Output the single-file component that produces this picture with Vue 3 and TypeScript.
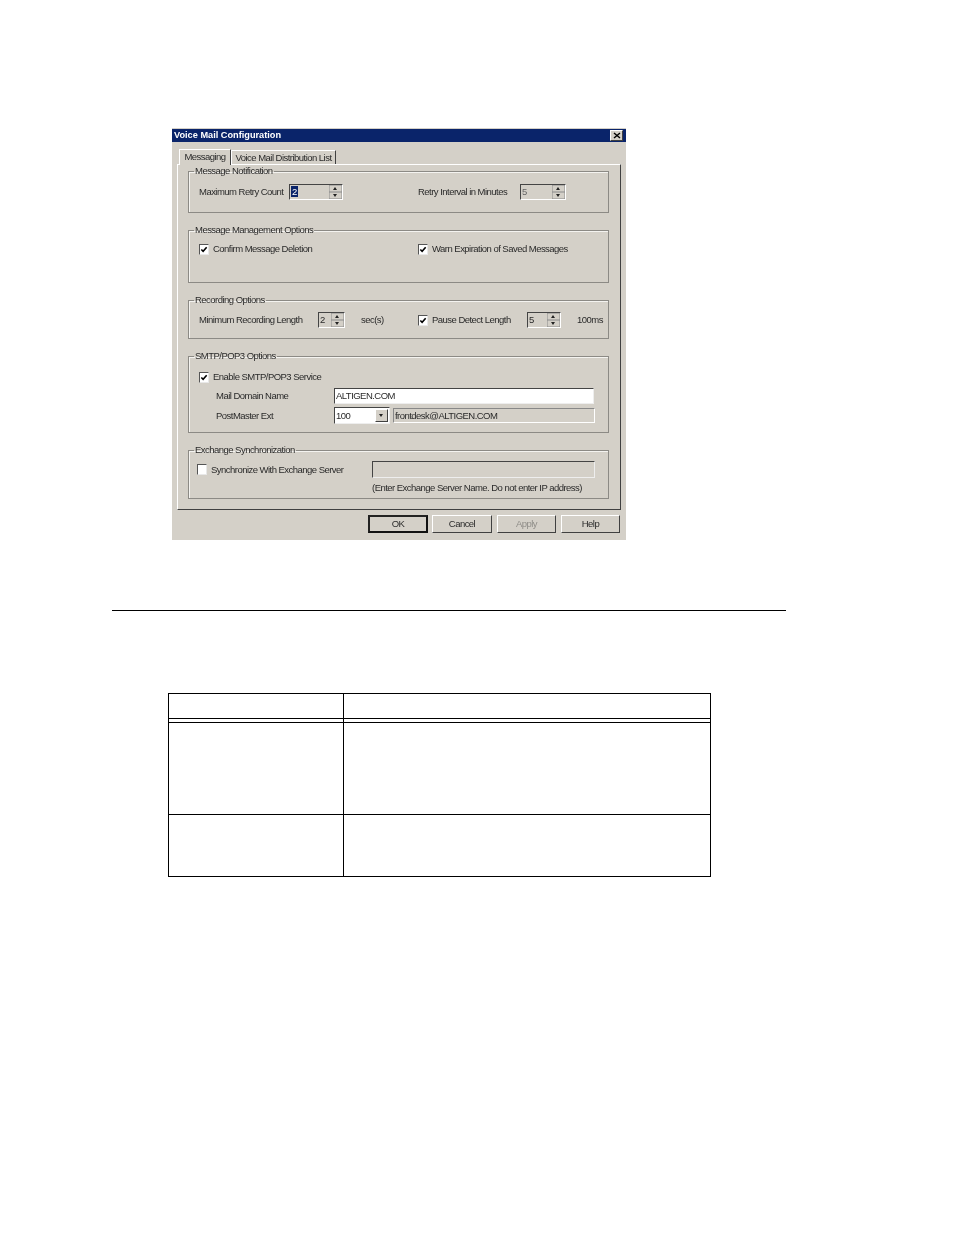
<script setup lang="ts">
const tabs: string[] = ['Messaging', 'Voice Mail Distribution List']
const buttons = [
  { label: 'OK', cls: 'default' },
  { label: 'Cancel', cls: '' },
  { label: 'Apply', cls: 'disabled' },
  { label: 'Help', cls: '' },
]
</script>

<template>
  <main class="page">
    <section class="dialog">
      <header class="titlebar">
        <span class="title">Voice Mail Configuration</span>
        <span class="close" aria-label="Close">
          <svg width="8" height="7" viewBox="0 0 8 7"><path d="M1 1l6 5M7 1L1 6" fill="none" stroke="#000" stroke-width="1.400" /></svg>
        </span>
      </header>

      <nav class="tabs">
        <span v-for="(t, i) in tabs" :key="t" class="tab" :class="{ active: i === 0 }">{{ t }}</span>
      </nav>

      <div class="panel">
        <fieldset class="group g1">
          <legend>Message Notification</legend>
          <div class="row r1">
            <span class="w-max">Maximum Retry Count</span>
            <span class="spin s54"><span class="val"><b class="sel">2</b></span><span class="arrows"><i class="up"></i><i class="down"></i></span></span>
            <span class="w-retry">Retry Interval in Minutes</span>
            <span class="spin s46"><span class="val off">5</span><span class="arrows"><i class="up"></i><i class="down"></i></span></span>
          </div>
        </fieldset>

        <fieldset class="group g2">
          <legend>Message Management Options</legend>
          <div class="row r2">
            <label class="check c219"><span class="box"><svg viewBox="0 0 9 9" width="9" height="9"><path d="M1.500 4.500l2 2L7.500 2" fill="none" stroke="#000" stroke-width="1.800" /></svg></span>Confirm Message Deletion</label>
            <label class="check"><span class="box"><svg viewBox="0 0 9 9" width="9" height="9"><path d="M1.500 4.500l2 2L7.500 2" fill="none" stroke="#000" stroke-width="1.800" /></svg></span>Warn Expiration of Saved Messages</label>
          </div>
        </fieldset>

        <fieldset class="group g3">
          <legend>Recording Options</legend>
          <div class="row r3">
            <span class="w-min">Minimum Recording Length</span>
            <span class="spin s27"><span class="val">2</span><span class="arrows"><i class="up"></i><i class="down"></i></span></span>
            <span class="w-sec">sec(s)</span>
            <label class="check c109"><span class="box"><svg viewBox="0 0 9 9" width="9" height="9"><path d="M1.500 4.500l2 2L7.500 2" fill="none" stroke="#000" stroke-width="1.800" /></svg></span>Pause Detect Length</label>
            <span class="spin s34"><span class="val">5</span><span class="arrows"><i class="up"></i><i class="down"></i></span></span>
            <span class="w-ms">100ms</span>
          </div>
        </fieldset>

        <fieldset class="group g4">
          <legend>SMTP/POP3 Options</legend>
          <div class="row r4a">
            <label class="check"><span class="box"><svg viewBox="0 0 9 9" width="9" height="9"><path d="M1.500 4.500l2 2L7.500 2" fill="none" stroke="#000" stroke-width="1.800" /></svg></span>Enable SMTP/POP3 Service</label>
          </div>
          <div class="row r4b">
            <span class="w-field">Mail Domain Name</span>
            <span class="input domain">ALTIGEN.COM</span>
          </div>
          <div class="row r4c">
            <span class="w-field">PostMaster Ext</span>
            <span class="input combo">100<span class="drop"><i class="down"></i></span></span>
            <span class="input readonly">frontdesk@ALTIGEN.COM</span>
          </div>
        </fieldset>

        <fieldset class="group g5">
          <legend>Exchange Synchronization</legend>
          <div class="row r5a">
            <label class="check c175"><span class="box"></span>Synchronize With Exchange Server</label>
            <span class="input server"></span>
          </div>
          <p class="hint">(Enter Exchange Server Name. Do not enter IP address)</p>
        </fieldset>
      </div>

      <footer class="footer">
        <button v-for="b in buttons" :key="b.label" type="button" class="btn" :class="b.cls">{{ b.label }}</button>
      </footer>
    </section>

    <hr class="rule" />

    <table class="grid">
      <tbody>
        <tr class="h-head"><td class="c1"></td><td></td></tr>
        <tr class="h-gap"><td class="c1"></td><td></td></tr>
        <tr class="h-a"><td class="c1"></td><td></td></tr>
        <tr class="h-b"><td class="c1"></td><td></td></tr>
      </tbody>
    </table>
  </main>
</template>

<style>
html, body { margin: 0; background: #fff; }
</style>

<style scoped>
.page {
  width: 954px;
  height: 1235px;
  padding-top: 128px;
  box-sizing: border-box;
  overflow: hidden;
}
.dialog {
  width: 454px;
  height: 412px;
  margin-left: 172px;
  background: #d4d0c8;
  box-sizing: border-box;
  padding: 1px 5px 0;
  font: 9.500px/12px "Liberation Sans", Arial, sans-serif;
  letter-spacing: -0.53px;
  color: #2a2a2a;
  display: flex;
  flex-direction: column;
  filter: blur(0.3px);
}
.titlebar {
  margin: 0 -5px;
  height: 13px;
  background: #0a246a;
  color: #fff;
  display: flex;
  align-items: center;
  justify-content: space-between;
  padding: 0 3px 1px 2px;
  box-sizing: border-box;
  flex: none;
}
.title { font-weight: 700; font-size: 9.200px; letter-spacing: 0; }
.close {
  width: 13px;
  height: 11px;
  margin-bottom: -1px;
  background: #d4d0c8;
  border: 1px solid;
  border-color: #fff #404040 #404040 #fff;
  box-sizing: border-box;
  display: flex;
  align-items: center;
  justify-content: center;
}
.tabs {
  height: 22px;
  display: flex;
  align-items: flex-end;
  padding-left: 2px;
  flex: none;
}
.tab {
  box-sizing: border-box;
  height: 14px;
  width: 105px;
  text-align: center;
  border: 1px solid;
  border-color: #fff #404040 transparent #fff;
  border-bottom: 0;
  line-height: 14px;
  white-space: nowrap;
}
.tab.active {
  width: 52px;
  height: 16px;
  position: relative;
  z-index: 1;
  top: 1px;
  line-height: 13px;
  background: #d4d0c8;
}
.panel {
  box-sizing: border-box;
  height: 346px;
  width: 444px;
  flex: none;
  border: 1px solid;
  border-color: #fff #404040 #404040 #fff;
  padding: 0 0 0 10px;
}
.group {
  box-sizing: border-box;
  width: 421px;
  margin: 0 0 11px;
  padding: 0 0 0 10px;
  border: 1px solid #8c8a85;
  box-shadow: inset 1px 1px 0 #f4f3f0;
  min-width: 0;
}
.group legend {
  padding: 0 1px;
  margin-left: -5px;
  line-height: 12px;
  white-space: nowrap;
}
.g1 { height: 48px; }
.g2 { height: 59px; }
.g3 { height: 45px; }
.g4 { height: 83px; }
.g5 { height: 55px; margin-bottom: 0; }

.row { display: flex; align-items: center; white-space: nowrap; }
.r1 { height: 16px; margin-top: 7px; }
.r2 { height: 14px; margin-top: 6px; }
.r3 { height: 16px; margin-top: 6px; }
.r4a { height: 14px; margin-top: 8px; }
.r4b { height: 17px; margin-top: 3px; padding-left: 17px; }
.r4c { height: 17px; margin-top: 3px; padding-left: 17px; }
.r5a { height: 17px; margin-top: 5px; margin-left: -2px; }

.w-max { width: 90px; }
.w-retry { width: 102px; margin-left: 75px; }
.w-min { width: 119px; }
.w-sec { width: 57px; margin-left: 16px; }
.w-ms { margin-left: 16px; }
.w-field { width: 118px; }
.c219 { width: 219px; }
.c109 { width: 109px; }
.c175 { width: 175px; }

.check { display: inline-flex; align-items: center; gap: 4px; }
.box {
  box-sizing: border-box;
  width: 10px;
  height: 11px;
  background: #fff;
  border: 1px solid;
  border-color: #555 #e8e8e8 #e8e8e8 #555;
  display: flex;
  align-items: center;
  justify-content: center;
  flex: none;
}
.box svg { display: block; }

.spin {
  box-sizing: border-box;
  height: 16px;
  display: flex;
  align-items: center;
  border: 1px solid;
  border-color: #444 #fff #fff #444;
  padding: 0 0 0 1px;
}
.s54 { width: 54px; }
.s46 { width: 46px; }
.s27 { width: 27px; }
.s34 { width: 34px; }
.val { flex: 1; line-height: 12px; }
.val.off { color: #666; }
.sel { background: #0a246a; color: #fff; font-weight: 400; padding: 0 1px; }
.arrows { width: 13px; display: flex; flex-direction: column; gap: 0; height: 14px; }
.arrows i {
  flex: 1;
  background: #d4d0c8;
  box-shadow: inset 0 0 0 0.5px #8a8a8a;
  position: relative;
}
.up::after, .down::after {
  content: "";
  position: absolute;
  left: 50%;
  top: 50%;
  margin: -1.500px 0 0 -2.500px;
  border-left: 2.500px solid transparent;
  border-right: 2.500px solid transparent;
}
.up::after { border-bottom: 3px solid #222; }
.down::after { border-top: 3px solid #222; }

.input {
  box-sizing: border-box;
  display: flex;
  align-items: center;
  height: 16px;
  padding-left: 1px;
  border: 1px solid;
  border-color: #444 #eee #eee #444;
}
.domain { width: 260px; background: #fff; }
.combo { width: 56px; height: 17px; background: #fff; justify-content: space-between; padding-right: 1px; }
.drop {
  width: 13px;
  height: 13px;
  background: #d4d0c8;
  border: 1px solid;
  border-color: #fff #404040 #404040 #fff;
  box-sizing: border-box;
  position: relative;
  display: block;
}
.drop i { position: absolute; inset: 0; }
.readonly { width: 202px; height: 15px; margin-left: 3px; border-color: #888 #fff #fff #888; }
.server { width: 223px; height: 17px; }
.hint { margin: 4px 0 0 173px; white-space: nowrap; }

.footer {
  display: flex;
  gap: 4px;
  margin-top: 5px;
  margin-left: 191px;
  flex: none;
}
.btn {
  box-sizing: border-box;
  width: 60px;
  height: 18px;
  padding: 0;
  font: inherit;
  letter-spacing: inherit;
  color: inherit;
  background: #d4d0c8;
  border: 1px solid;
  border-color: #fff #404040 #404040 #fff;
  border-radius: 0;
}
.btn.default { border: 2px solid; border-color: #222 #111 #111 #222; }
.btn.disabled { width: 59px; margin-left: 1px; color: #8f8d88; }
.btn:last-child { width: 59px; margin-left: 1px; }

.rule {
  width: 674px;
  height: 1px;
  margin: 70px 0 0 112px;
  padding: 0;
  border: 0;
  background: #000;
}
.grid {
  width: 543px;
  margin: 82px 0 0 168px;
  border-collapse: collapse;
  table-layout: fixed;
}
.grid td { border: 1px solid #000; padding: 0; font-size: 0; line-height: 0; }
.grid .c1 { width: 174px; }
.h-head td { height: 24px; }
.h-gap td { height: 3px; }
.h-a td { height: 91px; }
.h-b td { height: 61px; }
</style>
